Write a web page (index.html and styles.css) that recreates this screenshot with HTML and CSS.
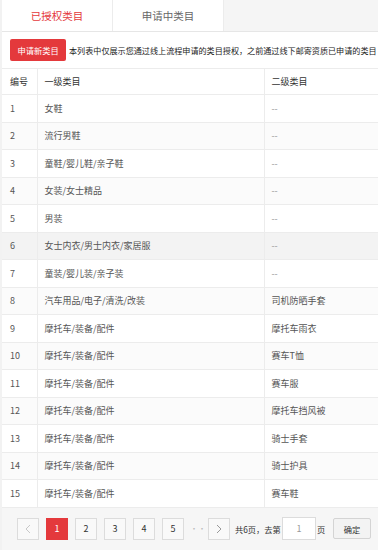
FILE: index.html
```html
<!DOCTYPE html>
<html lang="zh-CN">
<head>
<meta charset="utf-8">
<title>已授权类目</title>
<link rel="stylesheet" href="styles.css">
</head>
<body>
<div class="page">
  <div class="tabs">
    <div class="tab active">已授权类目</div>
    <div class="tab">申请中类目</div>
  </div>
  <div class="panel">
    <div class="toolbar">
      <button class="btn-apply">申请新类目</button>
      <span class="notice">本列表中仅展示您通过线上流程申请的类目授权，之前通过线下邮寄资质已申请的类目</span>
    </div>
    <table class="grid">
      <colgroup><col class="c1"><col class="c2"><col class="c3"></colgroup>
      <thead>
        <tr><th>编号</th><th>一级类目</th><th>二级类目</th></tr>
      </thead>
      <tbody>
        <tr><td>1</td><td>女鞋</td><td class="dash">--</td></tr>
        <tr class="even"><td>2</td><td>流行男鞋</td><td class="dash">--</td></tr>
        <tr><td>3</td><td>童鞋/婴儿鞋/亲子鞋</td><td class="dash">--</td></tr>
        <tr class="even"><td>4</td><td>女装/女士精品</td><td class="dash">--</td></tr>
        <tr><td>5</td><td>男装</td><td class="dash">--</td></tr>
        <tr class="hover"><td>6</td><td>女士内衣/男士内衣/家居服</td><td class="dash">--</td></tr>
        <tr><td>7</td><td>童装/婴儿装/亲子装</td><td class="dash">--</td></tr>
        <tr class="even"><td>8</td><td>汽车用品/电子/清洗/改装</td><td>司机防晒手套</td></tr>
        <tr><td>9</td><td>摩托车/装备/配件</td><td>摩托车雨衣</td></tr>
        <tr class="even"><td>10</td><td>摩托车/装备/配件</td><td>赛车T恤</td></tr>
        <tr><td>11</td><td>摩托车/装备/配件</td><td>赛车服</td></tr>
        <tr class="even"><td>12</td><td>摩托车/装备/配件</td><td>摩托车挡风被</td></tr>
        <tr><td>13</td><td>摩托车/装备/配件</td><td>骑士手套</td></tr>
        <tr class="even"><td>14</td><td>摩托车/装备/配件</td><td>骑士护具</td></tr>
        <tr><td>15</td><td>摩托车/装备/配件</td><td>赛车鞋</td></tr>
      </tbody>
    </table>
    <div class="pager">
      <span class="pg"><svg width="8" height="10" viewBox="0 0 8 10"><polyline points="6,1 2,5 6,9" fill="none" stroke="#c8c8c8" stroke-width="1"/></svg></span>
      <span class="pg current">1</span>
      <span class="pg">2</span>
      <span class="pg">3</span>
      <span class="pg">4</span>
      <span class="pg">5</span>
      <span class="ellipsis">···</span>
      <span class="pg pg-next"><svg width="8" height="10" viewBox="0 0 8 10"><polyline points="2,1 6,5 2,9" fill="none" stroke="#999" stroke-width="1"/></svg></span>
      <span class="total">共6页，去第</span>
      <span class="goto">1</span>
      <span class="unit">页</span>
      <span class="confirm">确定</span>
    </div>
  </div>
</div>
</body>
</html>
```

FILE: styles.css
```css
html, body {
  margin: 0;
  padding: 0;
  overflow: hidden;
}
body {
  background: #f2f2f2;
  font-family: "Noto Sans CJK SC", "Noto Sans", sans-serif;
  color: #333;
  width: 378px;
  height: 550px;
}
.page {
  padding-left: 2px;
  width: 560px;
}
.tabs {
  display: flex;
  height: 31px;
  border-bottom: 1px solid #e6e6e6;
  background: #f5f5f5;
}
.tab {
  width: 110px;
  background: #fff;
  color: #666;
  font-size: 10.5px;
  display: flex;
  align-items: center;
  justify-content: center;
  border-right: 1px solid #ececec;
}
.tab.active {
  color: #e4393c;
}
.panel {
  background: #fff;
}
.toolbar {
  display: flex;
  align-items: center;
  padding: 7px 0 7px 8px;
  gap: 3px;
  white-space: nowrap;
}
.btn-apply {
  height: 22px;
  width: 56px;
  padding: 0;
  border: 0;
  border-radius: 2px;
  background: #e4393c;
  color: #fff;
  font-family: inherit;
  font-size: 8.25px;
}
.notice {
  font-size: 8.1px;
  color: #222;
}
.grid {
  border-collapse: collapse;
  table-layout: fixed;
  width: 520px;
  font-size: 9px;
}
.c1 { width: 35px; }
.c2 { width: 227px; }
.c3 { width: 258px; }
.grid th, .grid td {
  border-top: 1px solid #ececec;
  border-bottom: 1px solid #ececec;
  border-left: 1px solid #ececec;
  text-align: left;
  padding: 0 0 0 7px;
  white-space: nowrap;
  overflow: hidden;
}
.grid th:first-child, .grid td:first-child {
  border-left: 0;
  padding-left: 8px;
}
.grid th {
  height: 25px;
  font-weight: normal;
  color: #333;
}
.grid td {
  height: 26.5px;
  color: #555;
}
.grid td.dash {
  color: #999;
}
.grid tr.even td {
  background: #fbfbfb;
}
.grid tr.hover td {
  background: #f3f3f3;
}
.pager {
  background: #f6f6f6;
  height: 42px;
  display: flex;
  align-items: center;
  padding-left: 15px;
  font-size: 9px;
  color: #333;
}
.pg {
  width: 20px;
  height: 20px;
  border: 1px solid #dcdcdc;
  background: #f9f9f9;
  display: flex;
  align-items: center;
  justify-content: center;
  margin-right: 7px;
  color: #333;
}
.pg.current {
  background: #e4393c;
  border-color: #e4393c;
  color: #fff;
}
.ellipsis {
  color: #bbb;
  width: 14px;
  margin-left: -1px;
  margin-right: 4px;
  text-align: center;
  font-size: 8px;
}
.pg.pg-next {
  margin-right: 5px;
}
.total {
  font-size: 8.25px;
  width: 46px;
  margin-right: 1px;
  white-space: nowrap;
}
.goto {
  width: 32px;
  height: 21px;
  border: 1px solid #dcdcdc;
  background: #fff;
  color: #999;
  display: flex;
  align-items: center;
  justify-content: center;
}
.unit {
  font-size: 8.25px;
  margin-left: 1px;
  width: 9px;
  margin-right: 7px;
}
.confirm {
  width: 36px;
  height: 19px;
  border: 1px solid #d4d4d4;
  border-radius: 2px;
  background: #f3f3f3;
  font-size: 8.25px;
  display: flex;
  align-items: center;
  justify-content: center;
}
```
